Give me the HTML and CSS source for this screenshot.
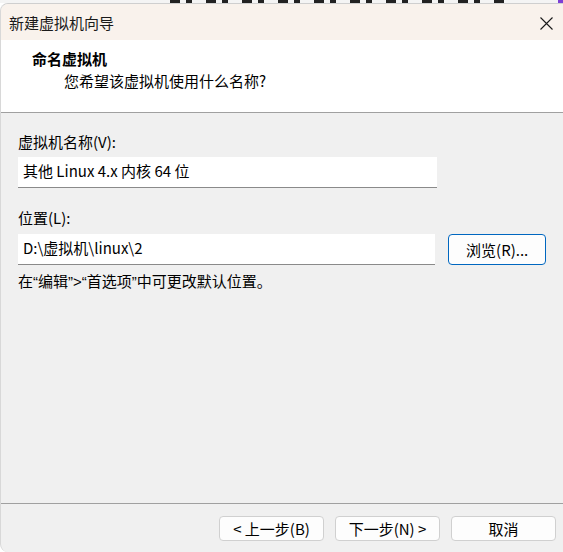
FILE: index.html
```html
<!DOCTYPE html>
<html lang="zh-CN">
<head>
<meta charset="utf-8">
<title>新建虚拟机向导</title>
<link rel="stylesheet" href="styles.css">
</head>
<body>
<div class="desktop-strip"><span class="blobs"></span><span class="purple"></span></div>
<div class="window">
  <div class="titlebar">
    <span class="title">新建虚拟机向导</span>
    <span class="close"><svg width="13" height="13" viewBox="0 0 13 13"><path d="M0.5 0.5 L12.5 12.5 M12.5 0.5 L0.5 12.5" stroke="#1a1a1a" stroke-width="1.1" fill="none"/></svg></span>
  </div>
  <div class="header">
    <div class="heading">命名虚拟机</div>
    <div class="subheading">您希望该虚拟机使用什么名称?</div>
  </div>
  <div class="content">
    <div class="label">虚拟机名称(V):</div>
    <div class="row">
      <div class="input">其他 Linux 4.x 内核 64 位</div>
    </div>
    <div class="label second">位置(L):</div>
    <div class="row">
      <div class="input">D:\虚拟机\linux\2</div>
      <button class="btn browse">浏览(R)...</button>
    </div>
    <div class="note">在<span class="latin">“</span>编辑<span class="latin">”&gt;“</span>首选项<span class="latin">”</span>中可更改默认位置。</div>
  </div>
  <div class="footer">
    <button class="btn nav">&lt; 上一步(B)</button>
    <button class="btn nav">下一步(N) &gt;</button>
    <button class="btn nav cancel">取消</button>
  </div>
</div>
</body>
</html>
```
FILE: styles.css
```css
* { box-sizing: border-box; }
html, body { margin: 0; padding: 0; }
body {
  width: 563px;
  height: 552px;
  overflow: hidden;
  background: #ffffff;
  font-family: "Noto Sans CJK SC", "Noto Sans", sans-serif;
  font-size: 15px;
  color: #000;
  display: flex;
  flex-direction: column;
}
.desktop-strip {
  height: 3px;
  flex: none;
  display: flex;
  background: #f4f4f4;
}
.blobs {
  margin-left: 170px;
  width: 335px;
  height: 3px;
  background: repeating-linear-gradient(90deg, #222 0 10px, #f4f4f4 10px 16px, #222 16px 22px, #f4f4f4 22px 36px);
}
.purple {
  margin-left: auto;
  width: 5px;
  height: 3px;
  background: #7d3fd6;
}
.window {
  flex: 1;
  display: flex;
  flex-direction: column;
  border-radius: 8px 0 0 8px;
  border-top: 1px solid #cfcfcf;
  border-left: 1px solid #d8d8d8;
  overflow: hidden;
  background: #f0f0f0;
}
.titlebar {
  height: 36px;
  flex: none;
  background: #f9f2ec;
  display: flex;
  align-items: center;
  padding: 0 10px 0 8px;
}
.title {
  font-size: 15px;
  line-height: 20px;
  color: #1a1a1a;
  padding-top: 2px;
}
.close {
  margin-left: auto;
  display: flex;
  padding-top: 2px;
}
.header {
  height: 73px;
  flex: none;
  background: #ffffff;
  border-bottom: 1px solid #a0a0a0;
  padding-top: 9px;
}
.heading {
  font-weight: bold;
  line-height: 20px;
  padding-left: 31px;
}
.subheading {
  line-height: 20px;
  padding-left: 63px;
  margin-top: 2px;
}
.content {
  flex: 1;
  padding: 20px 17px 0 17px;
  border-bottom: 1px solid #a0a0a0;
}
.label {
  line-height: 18px;
  margin-bottom: 6px;
}
.label.second {
  margin-top: 21px;
  margin-bottom: 7px;
}
.row {
  display: flex;
  align-items: flex-start;
  gap: 13px;
}
.input {
  width: 419px;
  height: 31px;
  background: #ffffff;
  border-bottom: 1px solid #8a8a8a;
  padding-left: 5px;
  line-height: 28px;
}
.latin {
  font-family: "Liberation Sans", sans-serif;
}
.btn {
  font-family: inherit;
  font-size: 15px;
  color: #000;
  background: #fdfdfd;
  border: 1px solid #d0d0d0;
  border-radius: 4px;
  padding: 0;
  line-height: 22px;
}
.browse {
  width: 98px;
  height: 31px;
  border-color: #0067c0;
}
.note {
  line-height: 20px;
  margin-top: 6px;
}
.footer {
  height: 48px;
  flex: none;
  display: flex;
  justify-content: flex-end;
  align-items: flex-start;
  gap: 11px;
  padding: 12px 7px 0 0;
}
.nav {
  width: 105px;
  height: 25px;
}
```
